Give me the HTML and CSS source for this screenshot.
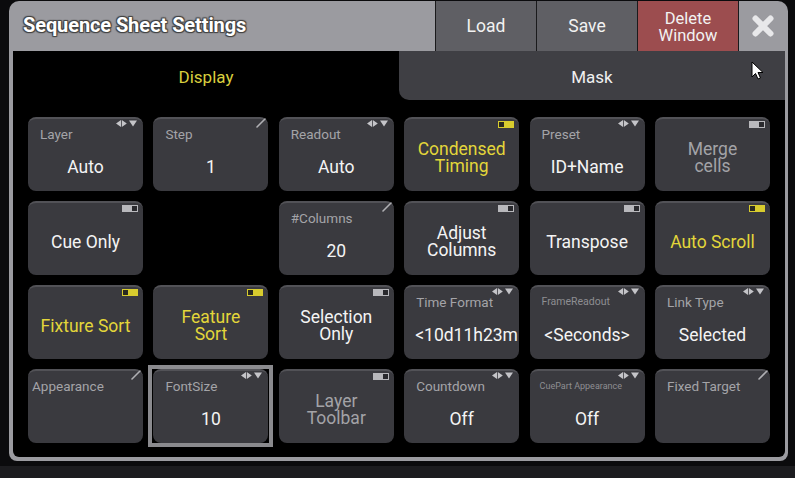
FILE: index.html
```html
<!DOCTYPE html>
<html>
<head>
<meta charset="utf-8">
<link rel="stylesheet" href="styles.css">
</head>
<body>
<div class="screen">
  <div class="window">
    <div class="titlebar">
      <div class="title">Sequence Sheet Settings</div>
      <div class="tbtn">Load</div>
      <div class="tbtn">Save</div>
      <div class="tbtn danger">Delete<br>Window</div>
      <div class="tclose">
        <svg width="24" height="24" viewBox="0 0 24 24"><path d="M4.5 4.5 L19.5 19.5 M19.5 4.5 L4.5 19.5" stroke="#e8e8ea" stroke-width="6" stroke-linecap="round"/></svg>
      </div>
    </div>
    <div class="content">
      <div class="tabs">
        <div class="tab active">Display</div>
        <div class="tab mask">Mask</div>
      </div>
      <div class="grid">
        <div class="cell"><svg class="ic arrows" width="22" height="7" viewBox="0 0 22 7"><path d="M0 3.5 L5 0 L5 7 Z M5.8 0 L10.8 3.5 L5.8 7 Z M13 0.5 L21 0.5 L17 6.5 Z"/></svg><div class="label">Layer</div><div class="value">Auto</div></div>
        <div class="cell"><svg class="ic pencil" width="10" height="10" viewBox="0 0 10 10"><path d="M1 9 L9 1"/></svg><div class="label">Step</div><div class="value">1</div></div>
        <div class="cell"><svg class="ic arrows" width="22" height="7" viewBox="0 0 22 7"><path d="M0 3.5 L5 0 L5 7 Z M5.8 0 L10.8 3.5 L5.8 7 Z M13 0.5 L21 0.5 L17 6.5 Z"/></svg><div class="label">Readout</div><div class="value">Auto</div></div>
        <div class="cell"><span class="ic toggle on"></span><div class="value yellow">Condensed<br>Timing</div></div>
        <div class="cell"><svg class="ic arrows" width="22" height="7" viewBox="0 0 22 7"><path d="M0 3.5 L5 0 L5 7 Z M5.8 0 L10.8 3.5 L5.8 7 Z M13 0.5 L21 0.5 L17 6.5 Z"/></svg><div class="label">Preset</div><div class="value">ID+Name</div></div>
        <div class="cell"><span class="ic toggle"></span><div class="value dim">Merge<br>cells</div></div>

        <div class="cell"><span class="ic toggle"></span><div class="value">Cue Only</div></div>
        <div class="empty"></div>
        <div class="cell"><svg class="ic pencil" width="10" height="10" viewBox="0 0 10 10"><path d="M1 9 L9 1"/></svg><div class="label">#Columns</div><div class="value">20</div></div>
        <div class="cell"><span class="ic toggle"></span><div class="value">Adjust<br>Columns</div></div>
        <div class="cell"><span class="ic toggle"></span><div class="value">Transpose</div></div>
        <div class="cell"><span class="ic toggle on"></span><div class="value yellow">Auto Scroll</div></div>

        <div class="cell"><span class="ic toggle on"></span><div class="value yellow">Fixture Sort</div></div>
        <div class="cell"><span class="ic toggle on"></span><div class="value yellow">Feature<br>Sort</div></div>
        <div class="cell"><span class="ic toggle"></span><div class="value">Selection<br>Only</div></div>
        <div class="cell"><svg class="ic arrows" width="22" height="7" viewBox="0 0 22 7"><path d="M0 3.5 L5 0 L5 7 Z M5.8 0 L10.8 3.5 L5.8 7 Z M13 0.5 L21 0.5 L17 6.5 Z"/></svg><div class="label">Time Format</div><div class="value left">&lt;10d11h23m</div></div>
        <div class="cell"><svg class="ic arrows" width="22" height="7" viewBox="0 0 22 7"><path d="M0 3.5 L5 0 L5 7 Z M5.8 0 L10.8 3.5 L5.8 7 Z M13 0.5 L21 0.5 L17 6.5 Z"/></svg><div class="label tiny">FrameReadout</div><div class="value">&lt;Seconds&gt;</div></div>
        <div class="cell"><svg class="ic arrows" width="22" height="7" viewBox="0 0 22 7"><path d="M0 3.5 L5 0 L5 7 Z M5.8 0 L10.8 3.5 L5.8 7 Z M13 0.5 L21 0.5 L17 6.5 Z"/></svg><div class="label">Link Type</div><div class="value">Selected</div></div>

        <div class="cell"><svg class="ic pencil" width="10" height="10" viewBox="0 0 10 10"><path d="M1 9 L9 1"/></svg><div class="label near">Appearance</div><div class="value"></div></div>
        <div class="cell selected"><svg class="ic arrows" width="22" height="7" viewBox="0 0 22 7"><path d="M0 3.5 L5 0 L5 7 Z M5.8 0 L10.8 3.5 L5.8 7 Z M13 0.5 L21 0.5 L17 6.5 Z"/></svg><div class="label">FontSize</div><div class="value">10</div></div>
        <div class="cell"><span class="ic toggle"></span><div class="value dim">Layer<br>Toolbar</div></div>
        <div class="cell"><svg class="ic arrows" width="22" height="7" viewBox="0 0 22 7"><path d="M0 3.5 L5 0 L5 7 Z M5.8 0 L10.8 3.5 L5.8 7 Z M13 0.5 L21 0.5 L17 6.5 Z"/></svg><div class="label">Countdown</div><div class="value">Off</div></div>
        <div class="cell"><svg class="ic arrows" width="22" height="7" viewBox="0 0 22 7"><path d="M0 3.5 L5 0 L5 7 Z M5.8 0 L10.8 3.5 L5.8 7 Z M13 0.5 L21 0.5 L17 6.5 Z"/></svg><div class="label tinier">CuePart Appearance</div><div class="value">Off</div></div>
        <div class="cell"><svg class="ic pencil" width="10" height="10" viewBox="0 0 10 10"><path d="M1 9 L9 1"/></svg><div class="label">Fixed Target</div><div class="value"></div></div>
      </div>
    </div>
  </div>
  <div class="band"></div>
  <svg class="cursor" width="14" height="20" viewBox="0 0 14 20"><path d="M1 1 L1 16 L4.5 12.5 L7 18 L9.5 17 L7 11.5 L12 11.5 Z" fill="#fff" stroke="#000" stroke-width="1"/></svg>
</div>
</body>
</html>
```
FILE: styles.css
```css
* { box-sizing: border-box; }
html, body { margin: 0; padding: 0; }
body {
  background: #0b0b0d;
  font-family: Roboto, "Noto Sans", Arial, sans-serif;
  width: 795px;
  height: 478px;
  overflow: hidden;
}
.screen {
  position: relative;
  width: 795px;
  height: 478px;
  padding: 1px 0 0 9px;
}
.window {
  width: 779px;
  background: #9b9ba0;
  border-radius: 10px 10px 8px 8px;
  overflow: hidden;
}
.titlebar {
  display: flex;
  height: 50px;
}
.title {
  flex: 1;
  color: #fff;
  font-weight: bold;
  font-size: 20px;
  padding: 12px 0 0 14px;
  letter-spacing: -0.1px;
  text-shadow: 0 0 1px #333, 1px 1px 1px #444, -1px -1px 1px #444, 1px -1px 1px #444, -1px 1px 1px #444;
}
.tbtn {
  width: 101px;
  border-left: 1px solid #1a1a1c;
  background: #5f5f64;
  color: #f2f2f2;
  font-size: 17.5px;
  display: flex;
  align-items: center;
  justify-content: center;
  text-align: center;
  line-height: 17px;
}
.tbtn.danger {
  background: #9c4d4f;
  font-size: 16.5px;
  padding-top: 1px;
}
.tclose {
  width: 50px;
  border-left: 1px solid #1a1a1c;
  display: flex;
  align-items: center;
  justify-content: center;
  padding-right: 2px;
}
.content {
  margin: 0 3px 4px 4px;
  background: #000;
  border-radius: 0 0 6px 6px;
  padding-bottom: 14px;
}
.tabs {
  display: flex;
  height: 49px;
}
.tab {
  display: flex;
  align-items: center;
  justify-content: center;
  font-size: 17px;
  color: #f0f0f0;
  padding-top: 2px;
}
.tab.active {
  width: 386px;
  color: #d9cf3e;
}
.tab.mask {
  flex: 1;
  background: #3f3f44;
  border-radius: 0 0 0 10px;
}
.grid {
  display: grid;
  grid-template-columns: repeat(6, 115px);
  grid-auto-rows: 74px;
  column-gap: 10.4px;
  row-gap: 10px;
  padding: 17px 0 0 15px;
}
.cell {
  position: relative;
  background: #3a3a3f;
  border-top: 2px solid #525257;
  border-radius: 8px;
  display: flex;
  flex-direction: column;
  padding-top: 6px;
}
.cell.selected::after {
  content: "";
  position: absolute;
  left: -5px;
  right: -5px;
  top: -6px;
  bottom: -4px;
  border: 4px solid #8a8a8e;
  pointer-events: none;
}
.label {
  height: 18px;
  line-height: 18px;
  font-size: 13.5px;
  color: #a4a4a8;
  padding-left: 12px;
  white-space: nowrap;
}
.label.near { padding-left: 4px; }
.label.tiny { font-size: 10.5px; color: #8e8e92; }
.label.tinier { font-size: 9px; color: #8e8e92; padding-left: 10px; }
.value {
  flex: 1;
  display: flex;
  align-items: center;
  justify-content: center;
  text-align: center;
  font-size: 17.5px;
  line-height: 17px;
  color: #f4f4f4;
  white-space: nowrap;
  overflow: hidden;
}
.value.left { justify-content: flex-start; padding-left: 11px; }
.value.yellow { color: #e3d63a; }
.value.dim { color: #a3a3a7; }
.ic {
  position: absolute;
  top: 1px;
  right: 5px;
}
.ic.arrows { fill: #c4c4c8; }
.ic.pencil {
  top: -1px;
  right: 2px;
  stroke: #b0b0b4;
  stroke-width: 1.6;
  stroke-linecap: round;
}
.ic.toggle {
  top: 2px;
  width: 16px;
  height: 7px;
  border: 1px solid #b8b8bc;
  background: linear-gradient(to right, #b8b8bc 62%, #2a2a2e 62%);
}
.ic.toggle.on {
  border-color: #d8cc2e;
  background: linear-gradient(to right, #2a2a20 38%, #d8cc2e 38%);
}
.band {
  position: absolute;
  left: 0;
  right: 0;
  bottom: 0;
  height: 12px;
  background: #1c1c1f;
}
.cursor {
  position: absolute;
  left: 751px;
  top: 61px;
}
```
